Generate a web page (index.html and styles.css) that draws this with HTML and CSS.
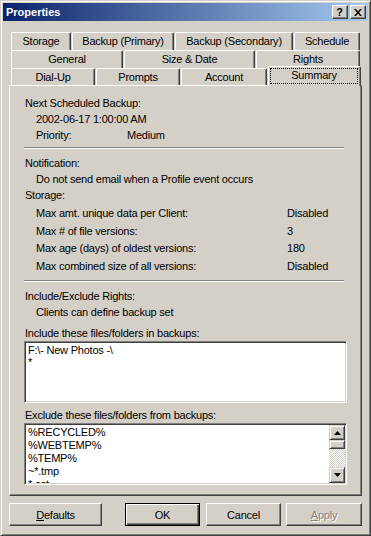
FILE: index.html
```html
<!DOCTYPE html>
<html>
<head>
<meta charset="utf-8">
<link rel="stylesheet" href="styles.css">
</head>
<body>
<div class="window">
  <div class="titlebar">
    <span class="title">Properties</span>
    <div class="tbtns">
      <span class="tbtn q">?</span>
      <span class="tbtn"><svg width="8" height="7" viewBox="0 0 8 7"><path d="M0 0h2l2 2.5L6 0h2L5 3.5 8 7H6L4 4.5 2 7H0l3-3.5z" fill="#000"/></svg></span>
    </div>
  </div>
  <div class="client">
    <div class="tabs">
      <div class="tabrow">
        <div class="tab w60">Storage</div>
        <div class="tab w102">Backup (Primary)</div>
        <div class="tab w118">Backup (Secondary)</div>
        <div class="tab w66">Schedule</div>
      </div>
      <div class="tabrow">
        <div class="tab w112">General</div>
        <div class="tab w131">Size &amp; Date</div>
        <div class="tab w104">Rights</div>
      </div>
      <div class="tabrow front">
        <div class="tab w84">Dial-Up</div>
        <div class="tab w84">Prompts</div>
        <div class="tab w86">Account</div>
        <div class="tab selected"><span class="focus">Summary</span></div>
      </div>
    </div>
    <div class="panel">
      <div class="line">Next Scheduled Backup:</div>
      <div class="line indent">2002-06-17 1:00:00 AM</div>
      <div class="line indent row"><span class="k1">Priority:</span><span>Medium</span></div>
      <div class="sep"></div>
      <div class="line">Notification:</div>
      <div class="line indent">Do not send email when a Profile event occurs</div>
      <div class="line">Storage:</div>
      <div class="storage">
        <div class="srow indent row"><span class="k2">Max amt. unique data per Client:</span><span>Disabled</span></div>
        <div class="srow indent row"><span class="k2">Max # of file versions:</span><span>3</span></div>
        <div class="srow indent row"><span class="k2">Max age (days) of oldest versions:</span><span>180</span></div>
        <div class="srow indent row"><span class="k2">Max combined size of all versions:</span><span>Disabled</span></div>
      </div>
      <div class="sep sep2"></div>
      <div class="line">Include/Exclude Rights:</div>
      <div class="line indent">Clients can define backup set</div>
      <div class="line gap">Include these files/folders in backups:</div>
      <div class="listbox">
        <div class="items">
          <div class="item">F:\- New Photos -\</div>
          <div class="item star">*</div>
        </div>
      </div>
      <div class="line gap short">Exclude these files/folders from backups:</div>
      <div class="listbox">
        <div class="items">
          <div class="item">%RECYCLED%</div>
          <div class="item">%WEBTEMP%</div>
          <div class="item">%TEMP%</div>
          <div class="item">~*.tmp</div>
          <div class="item">*.ost</div>
        </div>
        <div class="scrollbar">
          <div class="sbtn up"><svg width="7" height="4" viewBox="0 0 7 4"><path d="M3.5 0L7 4H0z" fill="#000"/></svg></div>
          <div class="thumb"></div>
          <div class="track"></div>
          <div class="sbtn down"><svg width="7" height="4" viewBox="0 0 7 4"><path d="M0 0h7L3.5 4z" fill="#000"/></svg></div>
        </div>
      </div>
    </div>
    <div class="buttons">
      <div class="btn b-defaults"><span><u>D</u>efaults</span></div>
      <div class="btn b-ok default">OK</div>
      <div class="btn b-cancel">Cancel</div>
      <div class="btn b-apply disabled"><span><u>A</u>pply</span></div>
    </div>
  </div>
</div>
</body>
</html>
```
FILE: styles.css
```css
* { box-sizing: border-box; margin: 0; padding: 0; }
html, body { width: 371px; height: 536px; overflow: hidden; background: #D4D0C8; }
body { font-family: "Liberation Sans", Arial, sans-serif; font-size: 11px; letter-spacing: -0.22px; color: #000; }

.window {
  width: 371px; height: 536px;
  border: 1px solid; border-color: #D4D0C8 #404040 #404040 #D4D0C8;
  box-shadow: inset 1px 1px #fff, inset -1px -1px #808080;
  padding: 2px;
  background: #D4D0C8;
}

.titlebar {
  height: 18px;
  background: linear-gradient(to right, #0A246A, #A6CAF0);
  display: flex; align-items: center; justify-content: space-between;
  padding: 0 2px 0 3px;
}
.title { color: #fff; font-weight: bold; font-size: 11px; letter-spacing: 0; }
.tbtns { display: flex; gap: 2px; }
.tbtn {
  width: 16px; height: 14px;
  background: #D4D0C8;
  border: 1px solid; border-color: #fff #404040 #404040 #fff;
  box-shadow: inset -1px -1px #808080;
  display: flex; align-items: center; justify-content: center;
}
.tbtn.q { font-weight: bold; font-size: 11px; line-height: 12px; padding-right: 1px; }

.client { padding: 11px 6px 0 6px; }

.tabs { padding-left: 2px; }
.tabrow { display: flex; gap: 1px; height: 18px; align-items: flex-start; }
.tabrow.front { height: 17px; }
.tab {
  flex-shrink: 0;
  height: 18px;
  border-top: 1px solid #fff; border-left: 1px solid #fff; border-right: 1px solid #404040;
  border-radius: 2px 2px 0 0;
  box-shadow: inset -1px 0 #808080;
  background: #D4D0C8;
  display: flex; align-items: center; justify-content: center;
  line-height: 13px;
}
.front .tab { height: 17px; padding-top: 1px; }
.w60 { width: 60px; } .w102 { width: 102px; } .w118 { width: 118px; } .w66 { width: 66px; }
.w112 { width: 112px; } .w131 { width: 131px; } .w104 { width: 104px; }
.w84 { width: 84px; } .w86 { width: 86px; }
.front .tab.selected {
  width: 93px; height: 20px; margin-top: -2px; padding: 0;
  position: relative; z-index: 1;
  align-items: stretch;
}
.focus {
  flex: 1;
  margin: 1px 2px 2px 1px;
  border: 1px dotted #000;
  display: flex; align-items: center; justify-content: center;
  padding-bottom: 1px;
}

.panel {
  height: 411px;
  border: 1px solid; border-color: #fff #404040 #404040 #fff;
  box-shadow: inset -1px -1px #808080;
  padding: 9px 0 0 15px;
}
.line { line-height: 16px; height: 16px; white-space: nowrap; }
.indent { padding-left: 11px; }
.row { display: flex; }
.k1 { width: 91px; }
.k2 { width: 251px; }
.storage { margin-top: 2px; }
.srow { height: 17.5px; line-height: 17.5px; white-space: nowrap; }
.sep {
  width: 320px; height: 2px; margin: 4px 0 6px -1px;
  border-top: 1px solid #808080; border-bottom: 1px solid #fff;
}
.sep2 { margin-top: 5px; }
.gap { margin-top: 5px; }
.short { height: 15px; line-height: 15px; }

.listbox {
  width: 323px; height: 62px; margin-left: -1px;
  background: #fff;
  border: 1px solid; border-color: #808080 #fff #fff #808080;
  box-shadow: inset 1px 1px #404040, inset -1px -1px #D4D0C8;
  padding: 1px;
  display: flex;
}
.items { flex: 1; overflow: hidden; padding: 1px 0 0 2px; background: #fff; }
.item { height: 13px; line-height: 13px; white-space: nowrap; }
.item.star { line-height: 11px; }

.scrollbar { width: 16px; display: flex; flex-direction: column; }
.sbtn {
  height: 16px; flex-shrink: 0;
  background: #D4D0C8;
  border: 1px solid; border-color: #D4D0C8 #404040 #404040 #D4D0C8;
  box-shadow: inset 1px 1px #fff, inset -1px -1px #808080;
  display: flex; align-items: center; justify-content: center;
}
.sbtn.up { height: 15px; }
.thumb {
  height: 9px; flex-shrink: 0;
  background: #D4D0C8;
  border: 1px solid; border-color: #D4D0C8 #404040 #404040 #D4D0C8;
  box-shadow: inset 1px 1px #fff, inset -1px -1px #808080;
}
.track {
  flex: 1;
  background: repeating-conic-gradient(#fff 0 25%, #D4D0C8 0 50%) 0 0 / 2px 2px;
}

.buttons { display: flex; padding-top: 7px; }
.btn {
  height: 23px;
  border: 1px solid; border-color: #fff #404040 #404040 #fff;
  box-shadow: inset -1px -1px #808080;
  display: flex; align-items: center; justify-content: center;
  flex-shrink: 0;
}
.b-defaults { width: 93px; margin-right: 23px; }
.b-ok { width: 75px; margin-right: 6px; }
.b-cancel { width: 75px; margin-right: 5px; }
.b-apply { width: 76px; }
.btn.default {
  border: 1px solid #000;
  box-shadow: inset 1px 1px #fff, inset -1px -1px #404040, inset -2px -2px #808080;
}
.btn.disabled { color: #808080; text-shadow: 1px 1px #fff; }
```
